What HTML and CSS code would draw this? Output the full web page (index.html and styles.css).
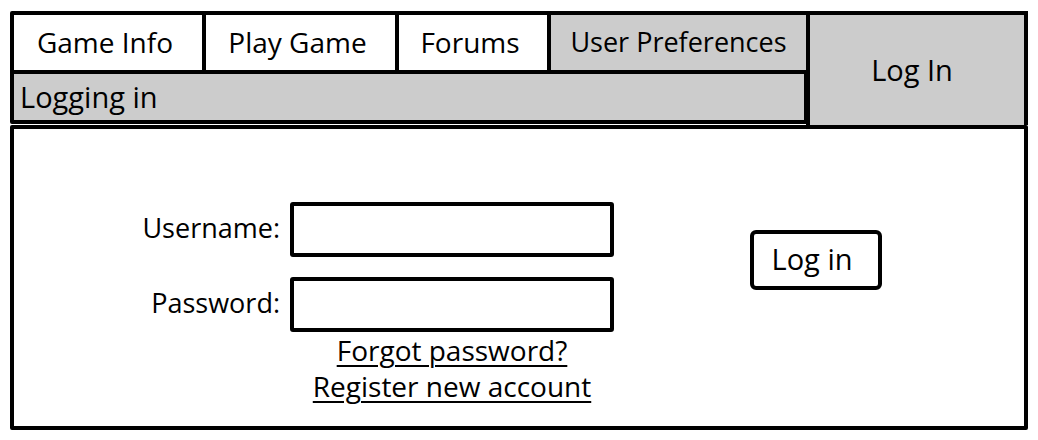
FILE: index.html
```html
<!DOCTYPE html>
<html lang="en">
<head>
  <meta charset="UTF-8" />
  <meta name="viewport" content="width=device-width, initial-scale=1.0"/>
  <title>Log In</title>
  <link rel="stylesheet" href="styles.css">
</head>
<body>

  <div class="page">
    <div class="header">
      <div class="nav">
        <div class="tabs">
          <div class="tab tab-info">Game Info</div>
          <div class="tab tab-play">Play Game</div>
          <div class="tab tab-forums">Forums</div>
          <div class="tab tab-prefs active">User Preferences</div>
        </div>
        <div class="crumb">Logging in</div>
      </div>
      <div class="login-tab">Log In</div>
    </div>

    <div class="main">
      <div class="login-form">
        <div class="field-row">
          <label class="field-label" for="username">Username:</label>
          <input class="field-input" id="username" type="text">
        </div>
        <div class="field-row">
          <label class="field-label" for="password">Password:</label>
          <input class="field-input" id="password" type="password">
        </div>
        <div class="links">
          <a href="#">Forgot password?</a>
          <a href="#">Register new account</a>
        </div>
      </div>
      <button class="btn">Log in</button>
    </div>
  </div>

</body>
</html>
```

FILE: styles.css
```css
* {
  box-sizing: border-box;
  margin: 0;
  padding: 0;
}

body {
  font-family: 'Open Sans', 'Noto Sans', sans-serif;
  font-size: 28px;
  color: #000;
  background-color: #fff;
}

.page {
  padding: 11px 10px 0 10px;
  width: 1038px;
}

.header {
  display: flex;
}

.nav {
  width: 800px;
}

.tabs {
  display: flex;
  height: 63px;
}

.tab {
  border: 4px solid #000;
  border-radius: 2px;
  margin-right: -4px;
  display: flex;
  align-items: center;
  justify-content: center;
  background-color: #fff;
  padding: 0 6px 2px 0;
}

.tab-info { width: 196px; }
.tab-play { width: 197px; }
.tab-forums { width: 156px; }
.tab-prefs {
  width: 263px;
  font-size: 27px;
  padding-right: 0;
}

.tab.active {
  background-color: #cccccc;
}

.crumb {
  margin-top: -4px;
  height: 54px;
  width: 798px;
  border: 4px solid #000;
  border-radius: 2px;
  background-color: #cccccc;
  padding: 0 0 2px 6px;
  display: flex;
  align-items: center;
  font-size: 29px;
}

.login-tab {
  width: 222px;
  height: 114px;
  margin-left: -4px;
  border: 4px solid #000;
  border-bottom: none;
  background-color: #cccccc;
  display: flex;
  align-items: center;
  justify-content: center;
  padding: 0 10px 2px 0;
  font-size: 29px;
}

.main {
  height: 305px;
  border: 4px solid #000;
  border-radius: 2px;
  display: flex;
  align-items: flex-start;
  padding: 73px 0 0 116px;
}

.field-row {
  display: flex;
  align-items: center;
  margin-bottom: 20px;
}

.field-row:nth-child(2) {
  margin-bottom: 0;
}

.field-label {
  width: 150px;
  text-align: right;
  margin-right: 10px;
  padding-bottom: 4px;
  font-size: 27px;
}

.field-input {
  width: 324px;
  height: 55px;
  border: 4px solid #000;
  border-radius: 3px;
  background-color: #fff;
}

.links {
  margin-left: 160px;
  width: 324px;
  display: flex;
  flex-direction: column;
  align-items: center;
  line-height: 36px;
}

.links a {
  color: #000;
  text-decoration: underline;
  text-underline-offset: 4px;
  text-decoration-thickness: 2px;
}

.btn {
  margin: 28px 0 0 136px;
  width: 132px;
  height: 60px;
  border: 4px solid #000;
  border-radius: 6px;
  background-color: #fff;
  font-family: inherit;
  font-size: 29px;
  color: #000;
  padding: 0 8px 4px 0;
}
```
